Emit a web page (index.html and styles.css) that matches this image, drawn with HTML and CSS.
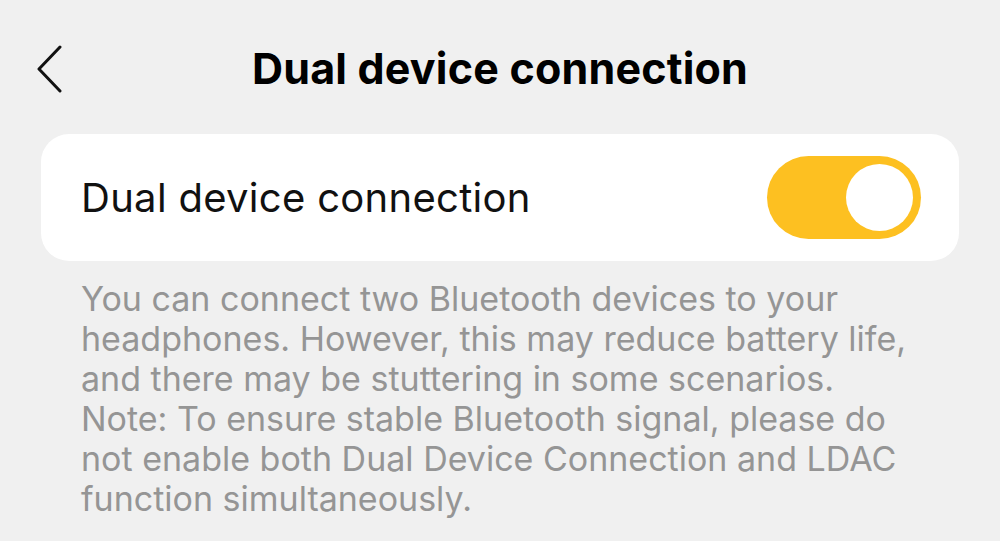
FILE: index.html
```html
<!DOCTYPE html>
<html>
<head>
<meta charset="utf-8">
<link rel="stylesheet" href="styles.css">
</head>
<body>
<div class="page">
  <header class="header">
    <button class="back" aria-label="Back">
      <svg width="26" height="48" viewBox="0 0 26 48"><path d="M24 2 L3 24 L24 46" fill="none" stroke="#111" stroke-width="3" stroke-linecap="round" stroke-linejoin="round"/></svg>
    </button>
    <h1 class="title">Dual device connection</h1>
  </header>
  <section class="card">
    <span class="label">Dual device connection</span>
    <span class="toggle"><span class="knob"></span></span>
  </section>
  <p class="desc">You can connect two Bluetooth devices to your headphones. However, this may reduce battery life, and there may be stuttering in some scenarios. Note: To ensure stable Bluetooth signal, please do not enable both Dual Device Connection and LDAC function simultaneously.</p>
</div>
</body>
</html>
```

FILE: styles.css
```css
html, body {
  margin: 0;
  padding: 0;
  background: #f0f0f0;
  font-family: Inter, "Noto Sans", sans-serif;
}
.page {
  width: 1000px;
  height: 541px;
  padding: 0 41px;
  box-sizing: border-box;
  overflow: hidden;
}
.header {
  height: 134px;
  display: flex;
  align-items: center;
  justify-content: center;
  position: relative;
}
.back {
  position: absolute;
  left: -5px;
  top: 45px;
  background: none;
  border: 0;
  padding: 0;
  width: 26px;
  height: 48px;
}
.back svg { display: block; }
.title {
  margin: 2px 0 0 0;
  font-size: 43px;
  font-weight: 700;
  letter-spacing: 0.2px;
  color: #000;
}
.card {
  height: 127px;
  background: #fff;
  border-radius: 28px;
  display: flex;
  align-items: center;
  justify-content: space-between;
  padding: 0 38px 0 40px;
}
.label {
  font-size: 40px;
  letter-spacing: 0.3px;
  color: #111;
}
.toggle {
  width: 154px;
  height: 83px;
  border-radius: 42px;
  background: #fdc021;
  display: flex;
  align-items: center;
  justify-content: flex-end;
  padding-right: 8px;
  box-sizing: border-box;
}
.knob {
  width: 67px;
  height: 67px;
  border-radius: 50%;
  background: #fff;
}
.desc {
  margin: 18px 0 0 40px;
  font-size: 34px;
  line-height: 40px;
  color: #959595;
  width: 840px;
}
```
